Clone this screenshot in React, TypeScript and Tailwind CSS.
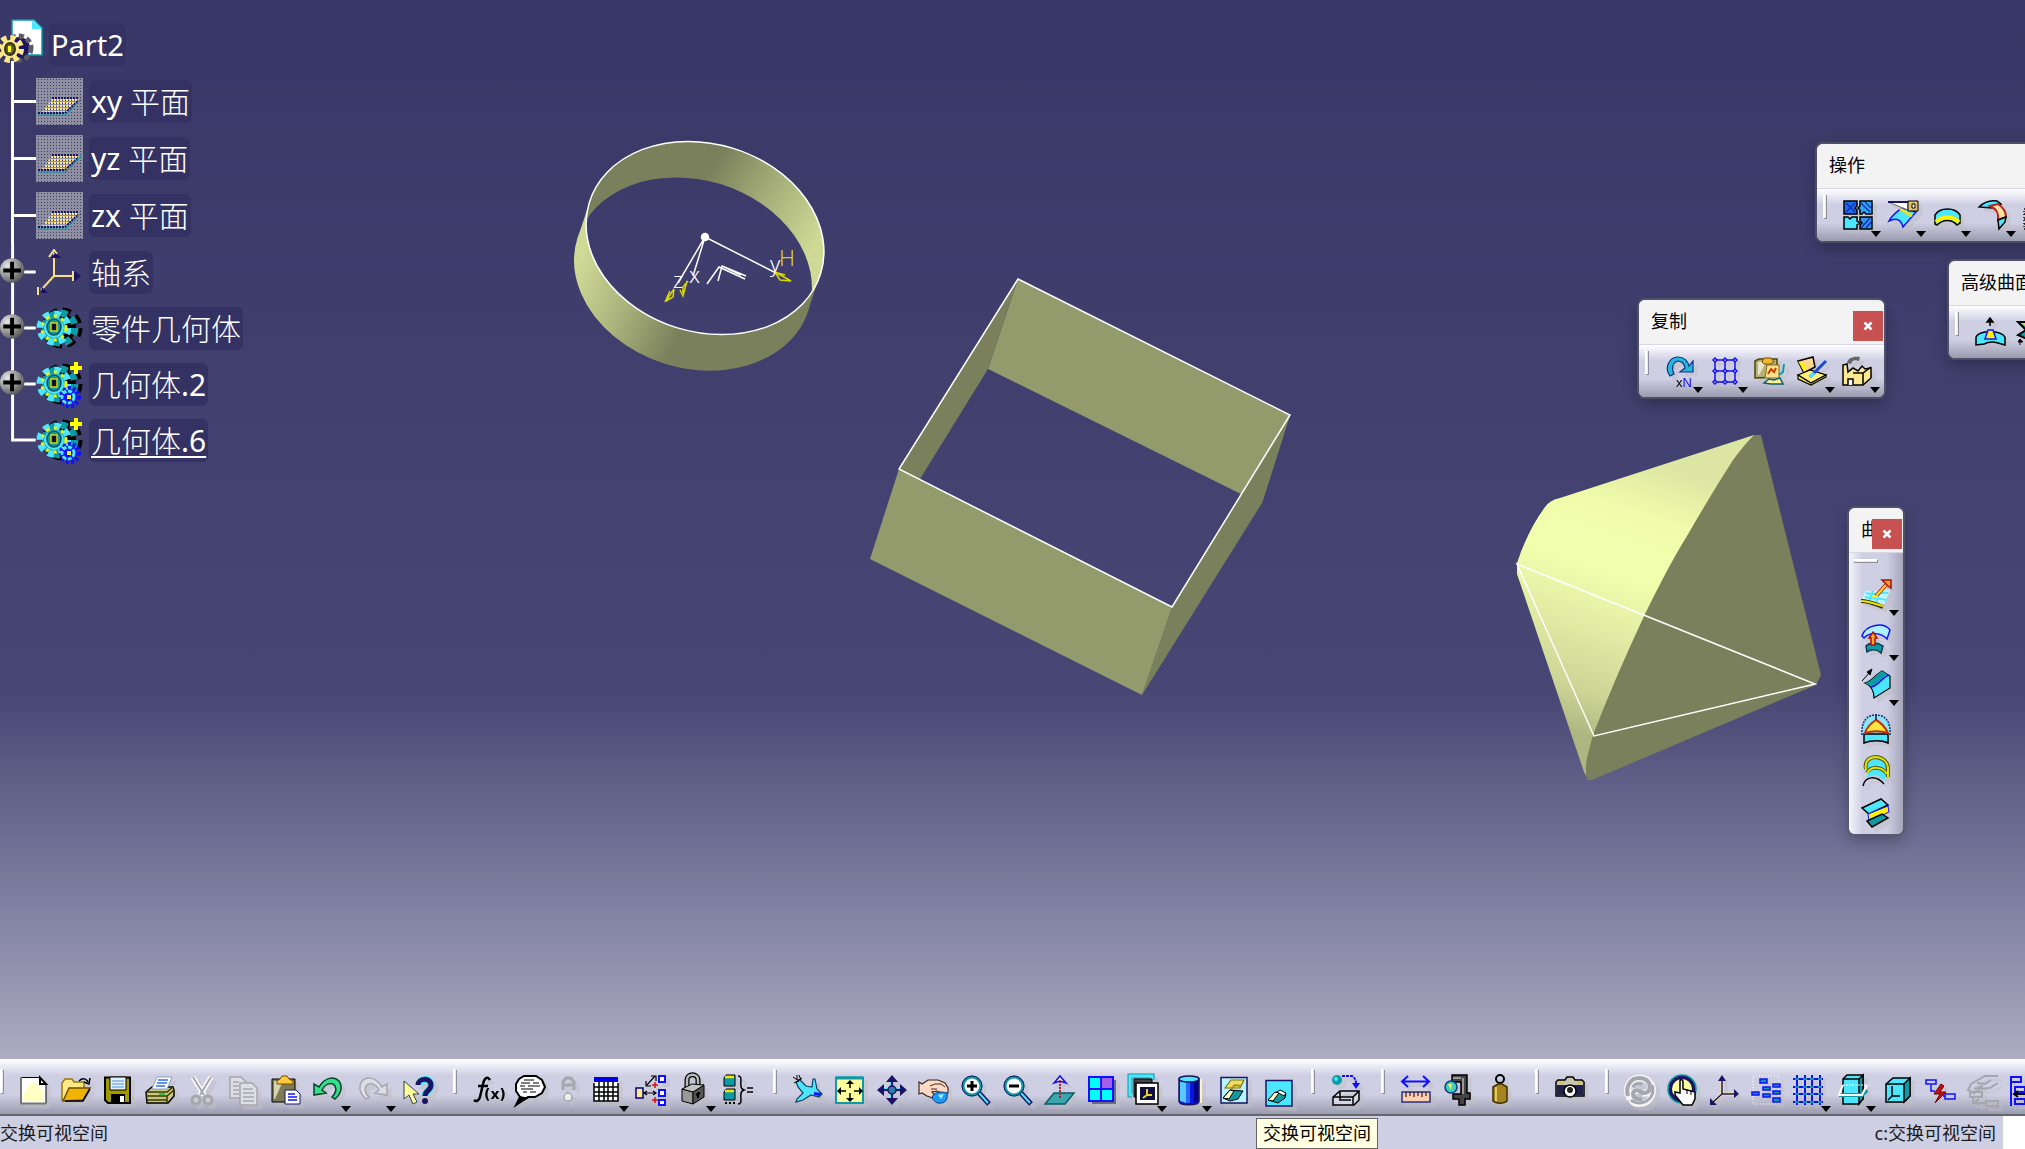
import type { ReactNode } from 'react';
import { clsx } from 'clsx';

const K = '#000';
const CYAN = '#4de6ff';
const TEAL = '#0e9aa5';
const NAVY = '#1b1464';
const BLUE = '#1010ff';
const SAND = '#ffe98a';
const GREY = '#a6a6ac';

// Every toolbar drawing lives in a 30x30 box
const icons: Record<string, ReactNode> = {
  new: (
    <>
      <path d="M2 2.5H21L27 9V28.5H2Z" fill="#fff" stroke={K} />
      <path d="M5 26V18l5-8 6-3 5 6 4 4v9Z" fill="#ffffc4" />
      <path d="M21 2.5V9H27Z" fill="#fff" stroke={K} strokeWidth="2" />
      <path d="M2 2V28.5H27" fill="none" stroke="#777" strokeWidth="2" />
    </>
  ),
  open: (
    <>
      <path d="M1 25V8L4 4h7l2 3h10v6L26 14 18 26Z" fill={SAND} stroke="#a07800" strokeWidth="1.5" />
      <path d="M2 26 8 13H29L22 25Z" fill="#f0b400" stroke="#6b5200" strokeWidth="1.5" />
      <path d="M4 26h18l7-12" fill="none" stroke={K} strokeWidth="1.5" />
      <path d="M18 6c3-3 7-3 9 1m2-4-1 6-5-2" fill="none" stroke={K} strokeWidth="1.5" />
    </>
  ),
  save: (
    <>
      <path d="M2 2.5H27V28H5L2 25Z" fill="#a09a00" stroke={K} strokeWidth="2" />
      <path d="M7 2h16v13H7Z" fill="#e4f3ff" stroke={K} />
      <path d="M9 6h12M9 9h12M9 12h12" stroke="#7fb2e8" strokeWidth="1.5" />
      <path d="M8 19h14v9H8Z" fill={K} />
      <path d="M17 21h4v6h-4Z" fill="#fff" />
    </>
  ),
  print: (
    <>
      <path d="M1 17 7 12h21l1 3v6l-6 7H2Z" fill="#c9c583" stroke={K} strokeWidth="1.5" />
      <path d="M7 14 12 2H27l-5 12Z" fill="#fff" stroke="#8aa0c0" />
      <path d="M13 5h10M12 8h10M11 11h9" stroke="#2b6cf0" strokeWidth="1.5" />
      <path d="M1 17H22l6-5M1 21H22V28M22 21l7-6M2 25h20" stroke="#3c3a00" strokeWidth="1.5" fill="none" />
      <path d="M14 18h6v2h-6Z" fill="#35c04a" />
    </>
  ),
  cut: (
    <g stroke={GREY} fill="none">
      <path d="M6 2 17 20M24 2 13 20" stroke="#fff" strokeWidth="5" />
      <path d="M6 2 17 20M24 2 13 20" strokeWidth="2" />
      <circle cx="9" cy="25" r="4" strokeWidth="3" fill="#ccc" />
      <circle cx="21" cy="25" r="4" strokeWidth="3" fill="#ccc" />
    </g>
  ),
  copy: (
    <g stroke={GREY} strokeWidth="1.5" fill="#dedee6">
      <path d="M1 2h11l5 5v16H1Z" />
      <path d="M4 7h6M4 11h6M4 15h6M4 19h6" />
      <path d="M11 8h12l5 5v17H11Z" />
      <path d="M14 14h10M14 18h11M14 22h11M14 26h11" />
    </g>
  ),
  paste: (
    <>
      <path d="M1 4H24V27H1Z" fill="#7d7a55" stroke={K} />
      <path d="M3 6h9L4 24H3Z" fill="#d6d3b0" />
      <path d="M6 6l3-2 2-3h5l2 3 4 2v3H6Z" fill="#ffc83d" stroke="#7a4b00" />
      <path d="M14 15h11l4 4v10H14Z" fill="#fff" stroke={NAVY} />
      <path d="M17 19h7M17 22h9M17 25h9" stroke={BLUE} strokeWidth="1.5" />
    </>
  ),
  undo: (
    <path
      d="M1 9 1 20 13 18 9 15C12 9 19 6 22 11c2 4 0 8-3 11l3 2c6-5 8-12 4-18C21 1 12 2 6 12Z"
      fill="#35e08a"
      stroke="#08402a"
      strokeWidth="1.5"
    />
  ),
  redo: (
    <path
      d="M29 9V20L17 18l4-3C18 9 11 6 8 11c-2 4 0 8 3 11l-3 2C2 19 0 12 4 6 9 1 18 2 24 12Z"
      fill="#dedee8"
      stroke={GREY}
      strokeWidth="1.5"
    />
  ),
  help: (
    <>
      <path d="M16 10c0-7 12-8 12 0 0 6-6 5-6 11" fill="none" stroke={CYAN} strokeWidth="7" />
      <path d="M15 10c0-7 13-8 13 0 0 6-6 5-6 11" fill="none" stroke={NAVY} strokeWidth="5" />
      <circle cx="22" cy="26" r="3" fill={NAVY} />
      <path d="M1 6v18l5-4 4 9 4-2-4-8h6Z" fill="#ffff9a" stroke="#2d3f60" />
    </>
  ),
  fx: (
    <>
      <path d="M17 5c-3-5-6-1-7 4L7 22c-1 4-4 5-6 3M5 11h10" fill="none" stroke={K} strokeWidth="2.5" />
      <text x="11" y="24" fontSize="14" fontFamily="'DejaVu Sans', sans-serif" fontWeight="bold">
        (x)
      </text>
    </>
  ),
  bubble: (
    <>
      <path d="M9 1h12l6 4 3 7-3 6-7 4h-7L1 30l4-8-4-6V9l3-5Z" fill="#fff" stroke={K} strokeWidth="2" />
      <path d="M9 5h10M6 8h9M18 8h6M5 11h5M13 11h12M6 14h12M8 17h4M15 17h6" stroke={K} />
      <path d="M1 30l4-9 9 2Z" fill={K} />
    </>
  ),
  annotation: (
    <g fill="none" stroke={GREY} strokeWidth="3">
      <path d="M10 15V7l3-4h5l3 4v8M10 10h11" />
      <circle cx="15" cy="22" r="4" fill="#eee" strokeWidth="1.5" />
    </g>
  ),
  table: (
    <>
      <path d="M3 3h24v23H3Z" fill="#fff" />
      <path d="M3 8V26H27V8M3 12h24M3 17h24M3 21h24M8 7v19M13 7v19M17 7v19M22 7v19" fill="none" stroke={K} strokeWidth="1.5" />
      <path d="M3 2h24v5H3Z" fill="#0000e8" />
    </>
  ),
  links: (
    <>
      <path d="M0 13h7v10H0Z" fill={SAND} stroke="#000080" strokeWidth="1.5" />
      <path d="M8 18H19M11 10 19 1M10 6v5h5M15 1h5v5M11 16l-3 2 3 2M17 16l3 2-3 2" fill="none" stroke={K} strokeWidth="1.2" />
      <path d="M16 10h6M19 7v6M16 25h6M19 22v6" stroke="#d01010" strokeWidth="1.5" />
      <path d="M23 1h6v6h-6ZM23 15h6v6h-6ZM23 25h6v5h-6Z" fill="#fff" stroke={BLUE} strokeWidth="2" />
    </>
  ),
  lock: (
    <>
      <path d="M9 13V5c0-7 11-7 11 0v7" fill="none" stroke={K} strokeWidth="5" />
      <path d="M9 13V5c0-7 11-7 11 0v7" fill="none" stroke="#bbb" strokeWidth="2.5" />
      <path d="M4 14 15 17V29L4 26Z" fill="#999" stroke={K} />
      <path d="M15 17 26 10V22L15 29Z" fill="#555" stroke={K} />
      <path d="M4 14 14 9 26 10 15 17Z" fill="#c4c4c4" stroke={K} />
      <path d="M20 17v6M18 20l4-2" stroke={K} strokeWidth="2" />
    </>
  ),
  equivalent: (
    <>
      <path d="M1 3 3 0h9v11H1ZM1 17l2-3h9v11H1Z" fill={TEAL} stroke={K} />
      <path d="M2 2h9M2 16h9" stroke="#f4e800" strokeWidth="2.5" />
      <path d="M2 28h2M6 28h2M10 28h2" stroke={K} strokeWidth="2" />
      <path d="M15 1c5 0 2 6 3 10 0 3 3 4 3 4s-3 1-3 4c-1 4 2 10-3 10M24 13h6M24 17h6" fill="none" stroke={K} strokeWidth="1.5" />
    </>
  ),
  fly: (
    <>
      <path d="M3 7 7 5l6 6 6 1 1-8 2 0 2 10 5 5-3 3-8-2-8 5-7 2 1-3 6-6-5-6Z" fill={CYAN} stroke="#124060" strokeWidth="1.2" />
      <path d="M0 2l6 4M6 0l2 5M1 8l5-2M4 0l0 5M9 3l-4 2" stroke={K} />
      <path d="M21 17l7 1-1 3-6-1Z" fill={BLUE} />
    </>
  ),
  fit: (
    <>
      <path d="M1 2.5h27V28H1Z" fill="#ffff9c" stroke={TEAL} strokeWidth="2" />
      <path d="M1 3h27" stroke={TEAL} strokeWidth="3" />
      <path d="M15 6v7M15 18v8M3 16h8M19 16h8" stroke={K} strokeWidth="1.5" />
      <path d="M11 9h8l-4-4ZM11 23h8l-4 4ZM6 12v8l-4-4ZM24 12v8l4-4Z" fill={K} />
    </>
  ),
  pan: (
    <>
      <path d="M15 3V27M3 15H27" stroke={CYAN} strokeWidth="4" />
      <path d="M15 3V27M3 15H27" stroke={NAVY} strokeWidth="2" />
      <path d="M9 7h12l-6-7ZM9 23h12l-6 7ZM7 9v12l-7-6ZM23 9v12l7-6Z" fill={NAVY} />
      <circle cx="15" cy="15" r="4" fill="#2d7fa8" stroke={NAVY} strokeWidth="1.5" />
    </>
  ),
  rotate: (
    <>
      <path d="M0 7 3 9l6-4 10 0 7 3 3 5 0 5-4 1-7-3-5 1 3 4-2 2-6-2-5-3-3 1Z" fill="#ffd9c4" stroke="#3a2a20" strokeWidth="1.2" />
      <path d="M11 11l5-2h6l4 3M12 14h6" fill="none" stroke="#3a2a20" />
      <path d="M13 23c1-6 9-7 15-5 1 5-1 10-6 10-4 1-7-2-9-5Z" fill="#1d9bf0" stroke="#083a90" />
      <path d="M19 20l6-1-3 5Z" fill="#a8ecff" />
    </>
  ),
  zoomIn: (
    <>
      <path d="M18 18 28 29" stroke={NAVY} strokeWidth="5" />
      <path d="M18 18 27 28" stroke={CYAN} strokeWidth="2" />
      <circle cx="11" cy="11" r="9" fill="#fff" stroke={TEAL} strokeWidth="3" />
      <circle cx="11" cy="11" r="10" fill="none" stroke={NAVY} />
      <path d="M11 6v10M6 11h10" stroke={K} strokeWidth="3" />
    </>
  ),
  zoomOut: (
    <>
      <path d="M18 18 28 29" stroke={NAVY} strokeWidth="5" />
      <path d="M18 18 27 28" stroke={CYAN} strokeWidth="2" />
      <circle cx="11" cy="11" r="9" fill="#fff" stroke={TEAL} strokeWidth="3" />
      <circle cx="11" cy="11" r="10" fill="none" stroke={NAVY} />
      <path d="M6 11h10" stroke={K} strokeWidth="3" />
    </>
  ),
  normal: (
    <>
      <path d="M9 18H29L20 29H0Z" fill="#3aa6ac" stroke="#0a5a66" strokeWidth="1.5" />
      <path d="M15 23V6" stroke="#b3202a" strokeWidth="2" strokeDasharray="2 1" />
      <path d="M9 8l6-7 6 7-6-2Z" fill={SAND} stroke={BLUE} strokeWidth="1.5" />
    </>
  ),
  multiview: (
    <>
      <path d="M5 5h24v24H5Z" fill="#6c6c7c" />
      <path d="M2 2h24v24H2Z" fill="#00ffff" stroke={BLUE} strokeWidth="2" />
      <path d="M14 3h11v11H14Z" fill="#a060e8" />
      <path d="M14 2v24M2 14h24" stroke={BLUE} strokeWidth="2" />
    </>
  ),
  isometric: (
    <>
      <path d="M3 20H1V1h22v4" fill="none" stroke={TEAL} strokeWidth="5" />
      <path d="M3 20H1V1h22v4" fill="none" stroke={CYAN} strokeWidth="3" />
      <path d="M5 4h18v18H5Z" fill="#444" stroke={K} />
      <path d="M7 8h22v21H7Z" fill="#fff" stroke={K} strokeWidth="1.5" />
      <path d="M11 12h15v13H11Z" fill="#101040" />
      <path d="M18 14v6l5 0M18 20l-4 3" fill="none" stroke="#e8d820" strokeWidth="2" />
    </>
  ),
  shading: (
    <>
      <path d="M5 4V26c0 5 20 5 20 0V4Z" fill="#0a12e0" stroke={NAVY} strokeWidth="1.5" />
      <path d="M6 5h6v23l-6-2Z" fill="#58c8ff" />
      <path d="M12 6h4v22h-4Z" fill="#2668f8" />
      <path d="M20 6h4v20l-4 2Z" fill="#000080" />
      <ellipse cx="15" cy="4" rx="10" ry="3" fill={CYAN} stroke={NAVY} strokeWidth="1.5" />
      <path d="M27 4v24" stroke="#fff6b0" strokeWidth="2" />
    </>
  ),
  hideShow: (
    <>
      <path d="M2 2.5h26V28H2Z" fill="#b8f4ff" stroke={NAVY} strokeWidth="1.5" />
      <path d="M6 13l6-8h13l-4 8Z" fill="#f0e060" stroke="#807010" strokeWidth="1.2" />
      <path d="M12 14l4-4 6 1" fill="none" stroke="#a09020" strokeWidth="2" />
      <path d="M4 23l7-8 13 1-5 8-8 2Z" fill={TEAL} stroke={K} />
      <path d="M4 23l7-8 4 1-5 8Z" fill="#fff8c0" stroke={K} />
    </>
  ),
  swapSpace: (
    <>
      <path d="M2 2.5h26V28H2Z" fill={CYAN} stroke={NAVY} strokeWidth="1.5" />
      <path d="M4 22l8-8 10 2-1 4-7 5Z" fill={TEAL} stroke={K} />
      <path d="M4 22l7-8 4 1-6 8Z" fill="#fff8c0" stroke={K} />
      <path d="M13 14l3-2 6 3-2 3Z" fill="#fff" stroke={K} />
    </>
  ),
  material: (
    <>
      <circle cx="6" cy="5" r="5" fill={TEAL} />
      <circle cx="5" cy="4" r="2" fill={CYAN} />
      <path d="M11 1h10c3 2 4 4 4 8" fill="none" stroke={BLUE} strokeWidth="2" strokeDasharray="3 1" />
      <path d="M21 8h8l-4 6Z" fill={BLUE} />
      <path d="M2 22 9 16H28V25L23 30H2ZM2 22H22l6-6M22 22v8M8 25h12M9 17v7" fill="#d6d6e4" stroke={K} strokeWidth="1.5" />
    </>
  ),
  measure: (
    <>
      <path d="M2 6.5H27M7 1 1 6.5 7 12M22 1l6 5.5L22 12" fill="none" stroke={BLUE} strokeWidth="2" />
      <path d="M1 17h28v10H1Z" fill="#ffcdb0" stroke="#2c3080" strokeWidth="1.5" />
      <path d="M5 17v5M9 17v4M13 17v5M17 17v4M21 17v5M25 17v4" stroke={K} />
    </>
  ),
  caliper: (
    <>
      <path d="M9 0H24V18H27V24H22V30H16V24H10V19h8V7H9Z" fill="#444" stroke={K} strokeWidth="1.5" />
      <path d="M20 3v16M10 3h8" stroke="#999" strokeWidth="2" />
      <circle cx="8" cy="12" r="6" fill="#3bd0c0" stroke="#083a80" strokeWidth="1.5" />
      <path d="M5 9l4 0-1 6Z" fill="#f8f060" />
    </>
  ),
  inertia: (
    <>
      <circle cx="15" cy="4" r="4" fill="none" stroke={K} strokeWidth="2" />
      <path d="M8 12l5-3h4l5 3V26c-3 3-11 3-14 0Z" fill="#a58520" stroke="#3f3000" strokeWidth="1.5" />
      <path d="M11 12v14" stroke="#e0cc60" strokeWidth="2" />
    </>
  ),
  camera: (
    <>
      <path d="M1 7 3 5h7l2-3h6l2 3h7l2 2V21H1Z" fill="#c8c8b0" stroke={K} strokeWidth="1.5" />
      <path d="M2 10h26v10H2Z" fill="#22224a" />
      <circle cx="15" cy="16" r="6" fill="#fff" stroke={K} strokeWidth="1.5" />
      <circle cx="15" cy="15" r="3" fill="#222" />
      <path d="M4 8h5M22 8h5" stroke="#e0c040" strokeWidth="2" />
    </>
  ),
  update: (
    <g fill="none">
      <path d="M5 24C-1 14 4 3 15 3c7 0 11 5 11 10 0 4-4 6-8 5" stroke="#f4f4f8" strokeWidth="7" />
      <path d="M26 8c5 9 0 21-12 21-6 0-8-3-8-7 0-5 3-7 8-6" stroke="#f4f4f8" strokeWidth="6" />
      <path d="M3 21C0 11 6 3 14 3c7 0 11 4 11 9 0 6-6 7-9 5-3-3-8-2-8 2s4 6 9 5" stroke={GREY} strokeWidth="4" />
      <path d="M27 10c3 9-2 17-12 18-4 0-7-1-9-3M8 12c1-3 5-4 9-3" stroke={GREY} strokeWidth="3" />
    </g>
  ),
  hand: (
    <>
      <circle cx="15" cy="14" r="12" fill="#ffffa0" stroke={NAVY} strokeWidth="4" />
      <circle cx="15" cy="14" r="14" fill="none" stroke={TEAL} strokeWidth="1.5" />
      <path d="M13 5c3-1 3 1 3 3v6l12 3v7l-3 6H16L8 20v-3l5 1Z" fill="#fff" stroke={K} strokeWidth="1.5" />
      <path d="M20 14v5M24 15v5" stroke={K} />
    </>
  ),
  axis: (
    <>
      <path d="M13 6V19H26M13 19 3 28" fill="none" stroke={SAND} strokeWidth="3" />
      <path d="M13 4V19H27M13 19 3 28" fill="none" stroke={NAVY} strokeWidth="1.5" />
      <path d="M9 6h8l-4-6ZM25 14v9l5-4ZM1 23v7h7Z" fill={NAVY} />
    </>
  ),
  tree: (
    <>
      <path d="M2 1h26v28H2Z" fill="none" stroke="#fff" strokeDasharray="1 2" />
      <path d="M9 4h7v4H9ZM22 9h7v3h-7ZM12 12h7v3h-7ZM1 17h7v3H1ZM12 19h7v3h-7ZM22 16h7v3h-7ZM22 23h7v4h-7Z" fill={TEAL} stroke={BLUE} strokeWidth="1.5" />
    </>
  ),
  grid: (
    <>
      <path d="M4 0v30M12 0v30M19 0v30M27 0v30M0 4h30M0 12h30M0 19h30M0 27h30" stroke={BLUE} strokeWidth="2" />
      <path d="M2 4h4M10 4h4M17 4h4M25 4h4M2 12h4M10 12h4M17 12h4M25 12h4M2 19h4M10 19h4M17 19h4M25 19h4M2 27h4M10 27h4M17 27h4M25 27h4" stroke={TEAL} strokeWidth="2" />
    </>
  ),
  section: (
    <>
      <path d="M5 4 9 0H25V24l-5 5H5Z" fill={CYAN} stroke={K} strokeWidth="1.5" />
      <path d="M21 4l4-4v24l-4 5Z" fill={TEAL} stroke={K} strokeWidth="1.5" />
      <path d="M5 4h16" stroke={K} strokeWidth="1.5" />
      <path d="M1 20H24L29 15" fill="none" stroke={TEAL} strokeWidth="4" />
      <path d="M5 10 1 20H24L29 10" fill="none" stroke="#fff" strokeWidth="2" />
      <path d="M5 10h24" stroke="#fff" strokeDasharray="2 1" />
    </>
  ),
  cube: (
    <>
      <path d="M3 9 10 3H27V21L21 27H3Z" fill={CYAN} stroke={K} strokeWidth="1.5" />
      <path d="M21 9l6-6v18l-6 6Z" fill={TEAL} stroke={K} strokeWidth="1.5" />
      <path d="M3 9h18M9 11v10h8M9 21l-4 4" fill="none" stroke={K} strokeWidth="1.5" />
    </>
  ),
  breakLink: (
    <>
      <path d="M1 5h10v4H1ZM20 19h10v5H20ZM6 10v6h4M18 21h2" fill="none" stroke={BLUE} strokeWidth="1.5" />
      <path d="M16 9 9 19h6l-5 9 11-11h-6l4-6Z" fill="#c01010" stroke="#700" />
    </>
  ),
  handTree: (
    <g fill="none" stroke={GREY} strokeWidth="2">
      <path d="M31 1H18L4 9 1 15l6 3 6-4 10-1 8-5M10 8l8 1 6-4M7 14l9-3" />
      <path d="M3 17h12v5H3ZM19 26h12v5H19ZM6 23v5h12M12 24l-4 3 4 3" />
    </g>
  ),
  treeWidth: (
    <>
      <path d="M2 2h10v5H2ZM6 12h10v5H6ZM6 24h10v5H6ZM2 7v24" fill="none" stroke={BLUE} strokeWidth="2" />
      <path d="M5 19h12M9 16l-4 3 4 3" fill="none" stroke={K} strokeWidth="2" />
    </>
  ),
  join: (
    <>
      <path d="M1 1h13v5l-2 2 2 2v4H1Z" fill="#1c6cf0" stroke={K} strokeWidth="1.5" />
      <path d="M17 1h12v13h-6l-2-2-2 2h-2v-4l-2-2 2-2Z" fill="#2fa5f5" stroke={K} strokeWidth="1.5" />
      <path d="M1 17h4l2 2 2-2h5v4l3 2-3 2v4H1Z" fill={CYAN} stroke={K} strokeWidth="1.5" />
      <path d="M17 17h12v12H17v-4l2-2-2-2Z" fill="#2f95f0" stroke={K} strokeWidth="1.5" />
      <path d="M18 3l9 9M22 2l6 6M18 28l9-10M23 28l5-6M3 3l9 9M12 3l-9 9" stroke="#0b2aa8" strokeWidth="1.2" />
    </>
  ),
  split: (
    <>
      <path d="M1 21C5 14 9 12 14 8l14 4-13 15c-2-7-6-10-14-6Z" fill={CYAN} stroke={BLUE} strokeWidth="1.5" />
      <path d="M12 9l12 7" stroke="#e8e020" strokeWidth="3" />
      <path d="M0 2h20v8Z" fill="#fff" stroke="#666" />
      <path d="M0 2h20" stroke={NAVY} strokeWidth="2" />
      <path d="M20 1h10v10H20Z" fill="#e0c468" stroke={K} />
      <path d="M24 4h3v4h-3Z" fill="#fff" stroke={K} />
    </>
  ),
  boundary: (
    <>
      <path d="M2 24V15C7 7 22 7 27 15v8l-3 2c-5-6-14-6-20 0Z" fill={CYAN} stroke={K} strokeWidth="1.5" />
      <path d="M3 22c6-6 17-6 23 0" fill="none" stroke="#fff200" strokeWidth="4" />
    </>
  ),
  fillet: (
    <>
      <path d="M1 7c5-5 12-7 18-6l4 3-9 4Z" fill={CYAN} stroke={K} strokeWidth="1.5" />
      <path d="M12 6l8-2c6 4 8 8 8 13l-8 3c1-7-1-11-8-14Z" fill="#ffe2a0" stroke="#c02020" strokeWidth="2" />
      <path d="M20 20l8-3-1 5-6 7Z" fill={CYAN} stroke={K} strokeWidth="1.5" />
    </>
  ),
  translate: <path d="M1 9h16v20H1ZM5 9v20M9 9v20M1 14h16M1 19h16M1 24h16" fill="none" stroke="#111" strokeWidth="1.5" strokeDasharray="1 2" />,
  repeat: (
    <>
      <path d="M5 20C-1 12 4 1 13 1c6 0 10 4 11 9l4-5v11H15l5-4C19 7 16 5 13 5 8 6 6 12 9 18Z" fill="#22b8d8" stroke="#10308a" strokeWidth="1.2" />
      <text x="11" y="31" fontSize="13" fontFamily="'Liberation Sans', sans-serif">
        x<tspan fill={BLUE}>N</tspan>
      </text>
    </>
  ),
  pattern: (
    <>
      <path d="M5 4v22M15 4v22M25 4v22M5 4h20M5 15h20M5 26h20" stroke={BLUE} strokeWidth="1.5" />
      {[4, 15, 26].map((y) =>
        [5, 15, 25].map((x) => (
          <path key={`${x}-${y}`} d={`M${x - 2} ${y}l2-2 2 2-2 2Z`} fill={SAND} stroke={BLUE} strokeWidth="1.5" />
        )),
      )}
    </>
  ),
  duplicate: (
    <>
      <path d="M0 5l4-2h18v18L0 22Z" fill="#b5b27c" stroke="#4b4800" strokeWidth="1.5" />
      <path d="M3 6h8L4 19H3Z" fill="#e8e6c8" />
      <path d="M7 6l2-4h7l3 4-3 2H9Z" fill="#f0b830" stroke="#7a4b00" />
      <path d="M12 9h12v13H10Z" fill="#ffe08a" stroke="#8a6a20" />
      <path d="M13 18l3-5 3 3 2-4" fill="none" stroke="#d04000" strokeWidth="2" />
      <path d="M9 27l5-4 5 1 6-2 3 6H16Z" fill="#f8f090" stroke="#106070" strokeWidth="1.5" />
      <path d="M29 8l-1 8-4 3" fill="none" stroke={TEAL} strokeWidth="2" />
    </>
  ),
  catalog: (
    <>
      <path d="M1 5 16 1l2 10L7 17Z" fill="#ffd88a" stroke={K} strokeWidth="1.5" />
      <path d="M1 5l7 4 0 9Z" fill="#fff200" />
      <path d="M1 19 13 14l16 5-15 8Z" fill="#fff27a" stroke={K} strokeWidth="1.2" />
      <path d="M1 19v4l13 6 15-8v-2l-15 8Z" fill="#f4e840" stroke={K} strokeWidth="1.2" />
      <path d="M13 21 29 5" stroke="#1848d8" strokeWidth="3" />
      <path d="M13 21l4-4" stroke={CYAN} strokeWidth="3" />
    </>
  ),
  factory: (
    <>
      <path d="M5 7c1-5 6-7 13-6l-1 4c-5-2-7 0-8 3Z" fill="#666" />
      <path d="M1 29V9l4-1 1 8 5-4 5 3 4-5 3 3 6-1v10l-8 7Z" fill="#ffe890" stroke={K} strokeWidth="1.5" />
      <path d="M11 17h10l8-6M21 17v12" fill="none" stroke={K} strokeWidth="1.5" />
      <path d="M6 29v-6h5v6" fill="#fff" stroke={K} strokeWidth="1.5" />
    </>
  ),
  bump: (
    <>
      <path d="M1 28V20C4 13 26 13 30 20v8l-7-2c-6-2-10-1-14 1Z" fill={CYAN} stroke={K} strokeWidth="1.5" />
      <path d="M10 22l3-9h5l3 9Z" fill="#fff200" stroke={BLUE} strokeWidth="1.5" />
      <path d="M15 9V2M12 5l3-4 3 4Z" fill={K} stroke={K} strokeWidth="1.5" />
    </>
  ),
  wrap: (
    <>
      <path d="M1 5h16v7H8ZM1 18l8-5h9v8H8Z" fill={TEAL} stroke={K} strokeWidth="2" />
      <path d="M4 6h10v3H8Z" fill="#e8e020" />
      <path d="M3 28v-5M1 25l2-3 3 3Z" fill={K} stroke={K} />
    </>
  ),
  extrude: (
    <>
      <path d="M5 11c7 4 15-2 24 0L22 28C14 25 7 22 0 22Z" fill="#c4f4ff" />
      <path d="M5 14c8 3 14-1 22 0M4 18c8 2 14 1 22 3M12 12l-4 11M19 11l-4 14" fill="none" stroke={CYAN} strokeWidth="2" />
      <path d="M0 22c8 0 14 3 22 6" fill="none" stroke="#333000" strokeWidth="4" />
      <path d="M0 22c8 0 14 3 22 5" fill="none" stroke="#f0e400" strokeWidth="2" />
      <path d="M15 17 25 6" stroke="#c02020" strokeWidth="4" />
      <path d="M15 17 26 5M11 18h6" stroke="#ffe020" strokeWidth="2" />
      <path d="M21 1h9v8l-3-2-3-3Z" fill="#f8a020" stroke="#a01010" strokeWidth="1.5" />
    </>
  ),
  offset: (
    <>
      <path d="M1 12C5 0 23-2 29 6l-3 9C20 8 9 8 3 14Z" fill="#aef0ff" stroke={BLUE} strokeWidth="1.5" />
      <path d="M5 22c4-4 11-4 17 0l-2 7c-4-4-10-4-14-1Z" fill={TEAL} stroke="#043a50" strokeWidth="1.5" />
      <path d="M10 21V14H8l4-6 4 6h-2v7Z" fill="#ffb020" stroke="#b01010" strokeWidth="1.5" />
    </>
  ),
  sweep: (
    <>
      <path d="M1 12 9 3M6 3l5-3-2 6Z" fill={K} stroke={K} />
      <path d="M4 14C12 12 16 4 21 2l8 5v12L13 29c0-7-2-12-9-15Z" fill={CYAN} stroke={K} strokeWidth="1.2" />
      <path d="M4 14C12 12 16 4 21 2l5 3c-5 4-9 12-14 13Z" fill={TEAL} />
      <path d="M10 18c8-1 11-10 18-12" fill="none" stroke={BLUE} strokeWidth="1.5" />
    </>
  ),
  fill: (
    <>
      <path d="M1 21C0 6 7 1 15 1s15 5 14 20" fill="#8ee6f0" stroke="#10308a" strokeWidth="1.5" strokeDasharray="2 1" />
      <path d="M3 20h24v9c-6-3-17-3-24 0Z" fill={CYAN} stroke={K} strokeWidth="1.5" />
      <path d="M4 19C6 13 10 9 15 6c6 3 9 7 12 13-7-2-16-2-23 0Z" fill="#ffe640" stroke="#c03010" strokeWidth="2" />
      <path d="M15 0v6" stroke={NAVY} strokeWidth="1.5" />
    </>
  ),
  loft: (
    <>
      <path d="M5 13C3 5 9 1 15 1c8 1 13 8 12 22-3-5-7-6-12-6s-8 1-8 1Z" fill={CYAN} />
      <path d="M5 13C3 5 9 1 15 1c8 1 12 6 12 12v8M6 17c4-7 15-7 20 1" fill="none" stroke="#55550a" strokeWidth="4" />
      <path d="M5 13C3 5 9 1 15 1c8 1 12 6 12 12v8M6 17c4-7 15-7 20 1" fill="none" stroke="#e4e410" strokeWidth="2" />
      <path d="M6 23c3-5 11-6 18 2v-7c-6-5-13-5-17-1Z" fill={CYAN} />
      <path d="M2 30c2-10 13-11 21-2" fill="none" stroke={K} strokeWidth="1.5" />
    </>
  ),
  blend: (
    <>
      <path d="M1 10 20 1l7 6L8 16Z" fill={CYAN} stroke={K} strokeWidth="1.5" />
      <path d="M7 16 27 8l1 6-20 9Z" fill="#fff200" stroke={BLUE} />
      <path d="M6 23 21 16l6 4-16 9Z" fill={TEAL} stroke={K} strokeWidth="1.5" />
    </>
  ),
};

type Tool = { icon: string; label: string; menu?: boolean; narrow?: boolean; pressed?: boolean };

const toolGroups: Tool[][] = [
  [
    { icon: 'new', label: '新建' },
    { icon: 'open', label: '打开' },
    { icon: 'save', label: '保存' },
    { icon: 'print', label: '打印' },
    { icon: 'cut', label: '剪切' },
    { icon: 'copy', label: '复制' },
    { icon: 'paste', label: '粘贴' },
    { icon: 'undo', label: '撤销', menu: true },
    { icon: 'redo', label: '重做', menu: true },
    { icon: 'help', label: '这是什么' },
  ],
  [
    { icon: 'fx', label: '公式' },
    { icon: 'bubble', label: '注释' },
    { icon: 'annotation', label: '检查分析', narrow: true },
    { icon: 'table', label: '设计表', menu: true },
    { icon: 'links', label: '知识工程' },
    { icon: 'lock', label: '锁定', menu: true },
    { icon: 'equivalent', label: '等效尺寸' },
  ],
  [
    { icon: 'fly', label: '飞行模式' },
    { icon: 'fit', label: '全部适应' },
    { icon: 'pan', label: '平移' },
    { icon: 'rotate', label: '旋转' },
    { icon: 'zoomIn', label: '放大' },
    { icon: 'zoomOut', label: '缩小' },
    { icon: 'normal', label: '法线视图' },
    { icon: 'multiview', label: '多视图' },
    { icon: 'isometric', label: '等轴测视图', menu: true },
    { icon: 'shading', label: '着色', menu: true },
    { icon: 'hideShow', label: '隐藏/显示' },
    { icon: 'swapSpace', label: '交换可视空间', pressed: true },
  ],
  [{ icon: 'material', label: '应用材料' }],
  [
    { icon: 'measure', label: '测量间距' },
    { icon: 'caliper', label: '测量项' },
    { icon: 'inertia', label: '测量惯量' },
  ],
  [{ icon: 'camera', label: '捕获' }],
  [
    { icon: 'update', label: '全部更新' },
    { icon: 'hand', label: '手动更新' },
    { icon: 'axis', label: '轴系' },
    { icon: 'tree', label: '历史' },
    { icon: 'grid', label: '工作支持面', menu: true },
    { icon: 'section', label: '剪切平面', menu: true },
    { icon: 'cube', label: '仅当前几何体' },
    { icon: 'breakLink', label: '断开' },
    { icon: 'handTree', label: '选择树' },
    { icon: 'treeWidth', label: '树宽' },
  ],
];

function ToolButton({ icon, label, menu, narrow, pressed }: Tool) {
  return (
    <button
      type="button"
      aria-label={label}
      className={clsx(
        'relative flex shrink-0 items-start',
        menu ? 'h-[45px] w-[45px] pl-[6px]' : 'h-[42px] justify-center',
        !menu && (narrow ? 'w-[34px]' : 'w-[42px]'),
        pressed ? 'pt-[9px] pl-[6px]' : 'pt-[6px]',
      )}
    >
      <svg
        viewBox="0 0 30 30"
        className="h-[30px] w-[30px] shrink-0 overflow-visible drop-shadow-[4px_4px_0_rgba(190,190,195,0.5)]"
      >
        {icons[icon]}
      </svg>
      {menu && (
        <svg viewBox="0 0 10 6" className="absolute right-px bottom-[2px] h-[6px] w-[10px]">
          <path d="M0 0h10L5 6Z" />
        </svg>
      )}
    </button>
  );
}

function Grip({ vertical }: { vertical?: boolean }) {
  return (
    <span
      className={clsx(
        'block shrink-0 border-white bg-[#e8e8f2] shadow-[1px_1px_0_#8e8e9c]',
        vertical ? 'h-[3px] w-6 border-t-2' : 'h-6 w-[3px] border-l-2',
      )}
    />
  );
}

type PaletteProps = {
  title: string;
  tools: Tool[];
  className: string;
  closable?: boolean;
  vertical?: boolean;
};

function Palette({ title, tools, className, closable, vertical }: PaletteProps) {
  return (
    <section
      className={clsx(
        'absolute overflow-hidden rounded-md bg-[#cfcfe4] shadow-[0_0_0_2px_rgba(90,90,110,0.7),0_6px_16px_rgba(0,0,0,0.3)]',
        className,
      )}
    >
      <header className="flex h-[45px] items-start overflow-hidden border-b border-[#d8d8e4] bg-[#f3f3f3]">
        <h2 className="min-w-0 flex-1 overflow-hidden pt-2 pl-3 text-[18px] leading-[26px] whitespace-nowrap text-black">
          {title}
        </h2>
        {closable && (
          <button
            type="button"
            aria-label={`关闭 ${title}`}
            className="mt-[11px] mr-px flex h-[30px] w-[30px] shrink-0 items-center justify-center bg-[#c75050]"
          >
            <svg viewBox="0 0 10 10" className="h-[10px] w-[10px]">
              <path d="M1.5 1.5 8.5 8.5M8.5 1.5 1.5 8.5" stroke="#fff" strokeWidth="2.5" />
            </svg>
          </button>
        )}
      </header>
      <div
        className={clsx(
          vertical
            ? 'flex flex-col bg-[linear-gradient(to_right,#f4f4fa,#cfcfe4_25%,#cfcfe4_70%,#a4a4ba)]'
            : 'flex h-[52px] items-start bg-[linear-gradient(#fff,#cfcfe4_30%,#cfcfe4_65%,#9b9bb0)] pt-[5px]',
        )}
      >
        <div className={vertical ? 'h-5 pt-[6px] pl-1' : 'w-5 shrink-0 pl-[6px]'}>
          <Grip vertical={vertical} />
        </div>
        <div className={clsx('flex', vertical && 'flex-col pl-[6px]')}>
          {tools.map((tool) => (
            <ToolButton key={tool.icon} {...tool} />
          ))}
        </div>
      </div>
    </section>
  );
}

function Gear() {
  return (
    <>
      <circle cx="26" cy="23" r="14" fill={K} />
      <circle cx="26" cy="23" r="17" fill="none" stroke={K} strokeWidth="7" strokeDasharray="8 5.35" />
      <circle cx="24" cy="23" r="15" fill="none" stroke={TEAL} strokeWidth="7" strokeDasharray="7 4.78" />
      <circle cx="18" cy="23" r="11" fill={CYAN} stroke={TEAL} strokeWidth="2" />
      <circle cx="18" cy="23" r="14" fill="none" stroke={CYAN} strokeWidth="7" strokeDasharray="6 5" />
      <circle cx="18" cy="23" r="12" fill="none" stroke="#f4f400" strokeWidth="3" strokeDasharray="3 5" />
      <ellipse cx="18" cy="22" rx="7" ry="8" fill={TEAL} stroke="#04505a" strokeWidth="1.5" />
      <path d="M15 18h6v8h-6Z" fill="#101030" stroke="#d8d800" strokeWidth="1.5" />
    </>
  );
}

function TreeIcon({ kind }: { kind: string }) {
  return (
    <svg viewBox="0 0 47 47" className="h-[47px] w-[47px] shrink-0">
      {kind === 'plane' && (
        <>
          <path d="M0 0h47v47H0Z" fill="url(#dither-grey)" />
          <path d="M16 21h27L31 34H6Z" fill="url(#dither-sand)" />
          <path d="M16 20h26M2 35h27L42 23" fill="none" stroke={NAVY} strokeWidth="2" strokeDasharray="2 1" />
          <path d="M2 37h28L45 21" fill="none" stroke={TEAL} />
        </>
      )}
      {kind === 'axis' && (
        <>
          <path d="M18 4v23h20M18 27 5 41M13 8l5-7 3 4M2 38v8M37 22v10" fill="none" stroke="#f8e08a" strokeWidth="2" />
          <path d="M15 9l4-5 7 5ZM38 22v11l7-6ZM6 38l6 6H5Z" fill={NAVY} />
        </>
      )}
      {kind.startsWith('body') && <Gear />}
      {kind === 'body-boolean' && (
        <>
          <circle cx="34" cy="36" r="7" fill={BLUE} />
          <circle cx="34" cy="36" r="9" fill="none" stroke={BLUE} strokeWidth="4" strokeDasharray="3 2" />
          <circle cx="32" cy="36" r="6" fill={BLUE} stroke={CYAN} strokeWidth="3" strokeDasharray="4 1.5" />
          <path d="M31 34h4v4h-4Z" fill="#f4f400" />
          <path d="M40 1v12M34 7h12" stroke="#ffff00" strokeWidth="4" />
        </>
      )}
    </svg>
  );
}

type Node = { latin?: string; cjk?: string; suffix?: string; kind: string; expandable?: boolean; active?: boolean };

const nodes: Node[] = [
  { latin: 'xy ', cjk: '平面', kind: 'plane' },
  { latin: 'yz ', cjk: '平面', kind: 'plane' },
  { latin: 'zx ', cjk: '平面', kind: 'plane' },
  { cjk: '轴系', kind: 'axis', expandable: true },
  { cjk: '零件几何体', kind: 'body', expandable: true },
  { cjk: '几何体', suffix: '.2', kind: 'body-boolean', expandable: true },
  { cjk: '几何体', suffix: '.6', kind: 'body-boolean', active: true },
];

function SpecTree() {
  return (
    <nav aria-label="规格树" className="relative w-fit pt-4 text-[30px] leading-[43px] text-white">
      <div className="flex h-[57px] items-center">
        <svg viewBox="0 0 49 57" className="h-[57px] w-[49px] shrink-0">
          <path d="M12 4H34l8 8V39H12Z" fill="#fff" stroke={TEAL} strokeWidth="1.5" />
          <path d="M32 4l10 9H32Z" fill={CYAN} />
          <circle cx="19" cy="32" r="11" fill={NAVY} />
          <circle cx="19" cy="32" r="12" fill="none" stroke="#5c5c62" strokeWidth="5" strokeDasharray="5 3" />
          <circle cx="10" cy="33" r="9" fill="#ffe88a" />
          <circle cx="10" cy="33" r="11" fill="none" stroke="#ffe88a" strokeWidth="6" strokeDasharray="5 3.64" />
          <ellipse cx="10" cy="33" rx="5" ry="6" fill="#60603a" stroke="#33331a" strokeWidth="2" />
          <path d="M8 30h3v6H8Z" fill="#ffff00" />
          <path d="M12.5 45V57" stroke="#fff" strokeWidth="3" />
        </svg>
        <span className="rounded-md bg-[#333262] px-[2px] text-[29px]">Part2</span>
      </div>
      <ul>
        {nodes.map(({ latin, cjk, suffix, kind, expandable, active }, i) => (
          <li key={i} className={clsx('flex items-center', kind === 'plane' ? 'h-[57px]' : 'h-14')}>
            <svg viewBox="0 0 36 57" className="h-full w-9 shrink-0">
              <path d={active ? 'M12.5 -1V28.5H36' : 'M12.5 -1V58M12.5 28.5H36'} fill="none" stroke="#fff" strokeWidth="3" />
              {expandable && (
                <>
                  <circle cx="12" cy="27" r="12.5" fill="url(#knob)" />
                  <path d="M12 18v18M3 27h18" stroke="#000" strokeWidth="4" />
                </>
              )}
            </svg>
            <TreeIcon kind={kind} />
            <button
              type="button"
              className={clsx(
                'ml-[6px] rounded-md bg-[#333262] px-[2px] whitespace-pre',
                active && 'underline decoration-2 underline-offset-4',
              )}
            >
              {latin}
              <span className="font-light">{cjk}</span>
              {suffix}
            </button>
          </li>
        ))}
      </ul>
    </nav>
  );
}

function Scene() {
  return (
    <svg className="absolute inset-0 h-full w-full" aria-hidden="true">
      <defs>
        <pattern id="dither-grey" width="3" height="3" patternUnits="userSpaceOnUse">
          <path d="M0 0h3v1H2v1h1v1H0Z" fill="#8f8fa2" />
        </pattern>
        <pattern id="dither-sand" width="3" height="3" patternUnits="userSpaceOnUse">
          <path d="M0 0h2v2H0Z" fill="#ffe88a" />
        </pattern>
        <radialGradient id="knob" cx="0.3" cy="0.3" r="0.8">
          <stop offset="0" stopColor="#e4e4e4" />
          <stop offset="0.5" stopColor="#9c9c9c" />
          <stop offset="1" stopColor="#4e4e4e" />
        </radialGradient>
        <linearGradient id="ring-in" gradientUnits="userSpaceOnUse" x1="710" y1="170" x2="820" y2="240">
          <stop offset="0" stopColor="#7a805b" />
          <stop offset="0.4" stopColor="#9fa873" />
          <stop offset="1" stopColor="#d0da97" />
        </linearGradient>
        <linearGradient id="ring-out" gradientUnits="userSpaceOnUse" x1="575" y1="270" x2="685" y2="320">
          <stop offset="0" stopColor="#d0da97" />
          <stop offset="0.5" stopColor="#a9b27b" />
          <stop offset="1" stopColor="#7a805b" />
        </linearGradient>
        <linearGradient id="cone" gradientUnits="userSpaceOnUse" x1="1640" y1="455" x2="1550" y2="725">
          <stop offset="0" stopColor="#dce5a2" />
          <stop offset="0.2" stopColor="#f0fcab" />
          <stop offset="0.42" stopColor="#f1ffad" />
          <stop offset="0.65" stopColor="#dfe9a2" />
          <stop offset="0.85" stopColor="#ccd595" />
          <stop offset="1" stopColor="#adb680" />
        </linearGradient>
        <mask id="ring-in-mask" maskUnits="userSpaceOnUse" x="560" y="120" width="300" height="270">
          <path d="M560 120h300v270H560Z" fill="#fff" />
          <ellipse cx="693" cy="274" rx="121" ry="94" transform="rotate(17 693 274)" fill="#000" />
        </mask>
        <mask id="ring-out-mask" maskUnits="userSpaceOnUse" x="560" y="120" width="300" height="270">
          <path d="M560 120h300v270H560Z" fill="#fff" />
          <ellipse cx="705" cy="238" rx="121" ry="94" transform="rotate(17 705 238)" fill="#000" />
        </mask>
        <clipPath id="ring-base">
          <path d="M590 201 820 275 808 311 578 237Z" />
          <ellipse cx="693" cy="274" rx="121" ry="94" transform="rotate(17 693 274)" />
        </clipPath>
        <clipPath id="ring-rim">
          <ellipse cx="705" cy="238" rx="121" ry="94" transform="rotate(17 705 238)" />
        </clipPath>
      </defs>

      {/* Cylinder surface */}
      <g mask="url(#ring-out-mask)">
        <path d="M560 120h300v270H560Z" clipPath="url(#ring-base)" fill="url(#ring-out)" />
      </g>
      <g mask="url(#ring-in-mask)">
        <path d="M560 120h300v270H560Z" clipPath="url(#ring-rim)" fill="url(#ring-in)" />
      </g>
      <ellipse
        cx="705"
        cy="238"
        rx="121"
        ry="94"
        transform="rotate(17 705 238)"
        fill="none"
        stroke="#fff"
        strokeWidth="1.5"
      />

      {/* Sketch axes */}
      <g fill="none" stroke="#fff" strokeWidth="1.5">
        <path d="M705 237 774 272M705 237 678 283M705 237 693 276" />
        <path d="M707 284 719 267 745 279M718 281 722 266 741 275M722 266 746 276" />
        <circle cx="705" cy="237" r="3.5" fill="#fff" />
      </g>
      <g fill="none" stroke="#d8d800" strokeWidth="1.5">
        <path d="M775 272 791 281 780 280ZM774 272 785 275M674 289 666 301 673 297ZM670 291 665 302M683 293V287L688 281M680 290 683 296 687 281" />
      </g>
      <g fontFamily="'Noto Sans', sans-serif" fontSize="22" fontWeight="300" fill="#fff">
        <text x="770" y="272">y</text>
        <text x="689" y="283">x</text>
        <text x="673" y="288">z</text>
        <text x="779" y="266" fill="#d8d800">H</text>
      </g>

      {/* Box surface */}
      <path d="M1018 279 1290 415 1262 503 1241 494 988 369Z" fill="#939b6d" />
      <path d="M1018 279 988 369 920 479 899 469Z" fill="#7a805b" />
      <path d="M1290 415 1262 503 1142 695 1172 607Z" fill="#7a805b" />
      <path d="M899 469 1172 607 1142 695 870 559Z" fill="#939b6d" />
      <path d="M1018 279 1290 415 1172 607 899 469Z" fill="none" stroke="#fff" strokeWidth="1.5" />

      {/* Multi-section surface */}
      <path
        d="M1754 435 1560 498Q1550 500 1545 507 1528 530 1517 563L1517 574 1584 772 1589 780 1700 700 1761 435Z"
        fill="url(#cone)"
      />
      <path
        d="M1754 435H1761L1821 675 1816 685 1592 780H1587Q1584 766 1589 750L1593 735Q1615 678 1645 614 1670 563 1687 536 1710 496 1733 460 1744 445 1754 435Z"
        fill="#7a805b"
      />
      <path d="M1517 564 1815 684 1594 736Z" fill="none" stroke="#fff" strokeWidth="1.5" />
    </svg>
  );
}

export default function App() {
  return (
    <div className="flex h-screen flex-col overflow-hidden font-['Noto_Sans','Noto_Sans_CJK_SC',sans-serif]">
      <main className="relative flex-1 overflow-hidden bg-linear-to-b from-[#383767] via-[#474674] via-65% to-[#acacc2]">
        <Scene />
        <SpecTree />
        <Palette
          title="操作"
          className="top-[144px] left-[1817px] w-[300px]"
          tools={[
            { icon: 'join', label: '接合', menu: true },
            { icon: 'split', label: '分割', menu: true },
            { icon: 'boundary', label: '边界', menu: true },
            { icon: 'fillet', label: '圆角', menu: true },
            { icon: 'translate', label: '平移' },
          ]}
        />
        <Palette
          title="高级曲面"
          className="top-[261px] left-[1949px] w-[200px]"
          tools={[
            { icon: 'bump', label: '凸起' },
            { icon: 'wrap', label: '包裹曲线' },
          ]}
        />
        <Palette
          title="复制"
          closable
          className="top-[300px] left-[1639px] w-[245px]"
          tools={[
            { icon: 'repeat', label: '对象复制', menu: true },
            { icon: 'pattern', label: '矩形阵列', menu: true },
            { icon: 'duplicate', label: '复制几何集' },
            { icon: 'catalog', label: '目录', menu: true },
            { icon: 'factory', label: '超级副本', menu: true },
          ]}
        />
        <Palette
          title="曲面"
          closable
          vertical
          className="top-[508px] left-[1849px] w-[54px]"
          tools={[
            { icon: 'extrude', label: '拉伸', menu: true },
            { icon: 'offset', label: '偏移', menu: true },
            { icon: 'sweep', label: '扫掠', menu: true },
            { icon: 'fill', label: '填充' },
            { icon: 'loft', label: '多截面曲面' },
            { icon: 'blend', label: '桥接' },
          ]}
        />
      </main>

      <div
        role="toolbar"
        className="relative flex h-[57px] shrink-0 items-start border-b-2 border-[#66666e] bg-[linear-gradient(#fff,#cfcfe4_30%,#cfcfe4_65%,#9b9bb0)] pt-[10px]"
      >
        {toolGroups.map((group, i) => (
          <div key={group[0].icon} className="flex shrink-0">
            <div className={clsx('flex shrink-0', i === 0 ? 'w-[13px]' : 'w-7 pl-[14px]')}>
              <Grip />
            </div>
            {group.map((tool) => (
              <ToolButton key={tool.icon} {...tool} />
            ))}
          </div>
        ))}
      </div>

      <footer className="relative flex h-[33px] shrink-0 items-center bg-[#cfcfe4] text-[18px] leading-[26px] text-[#1a1a1a]">
        <span className="flex-1">交换可视空间</span>
        <div
          role="tooltip"
          className="absolute top-[2px] left-[1256px] border border-[#666] bg-[#ffffe1] px-[6px] leading-[29px] text-black"
        >
          交换可视空间
        </div>
        <label htmlFor="command">c:交换可视空间</label>
        <input id="command" type="text" className="ml-[7px] h-full w-[22px] bg-white outline-none" />
      </footer>
    </div>
  );
}
